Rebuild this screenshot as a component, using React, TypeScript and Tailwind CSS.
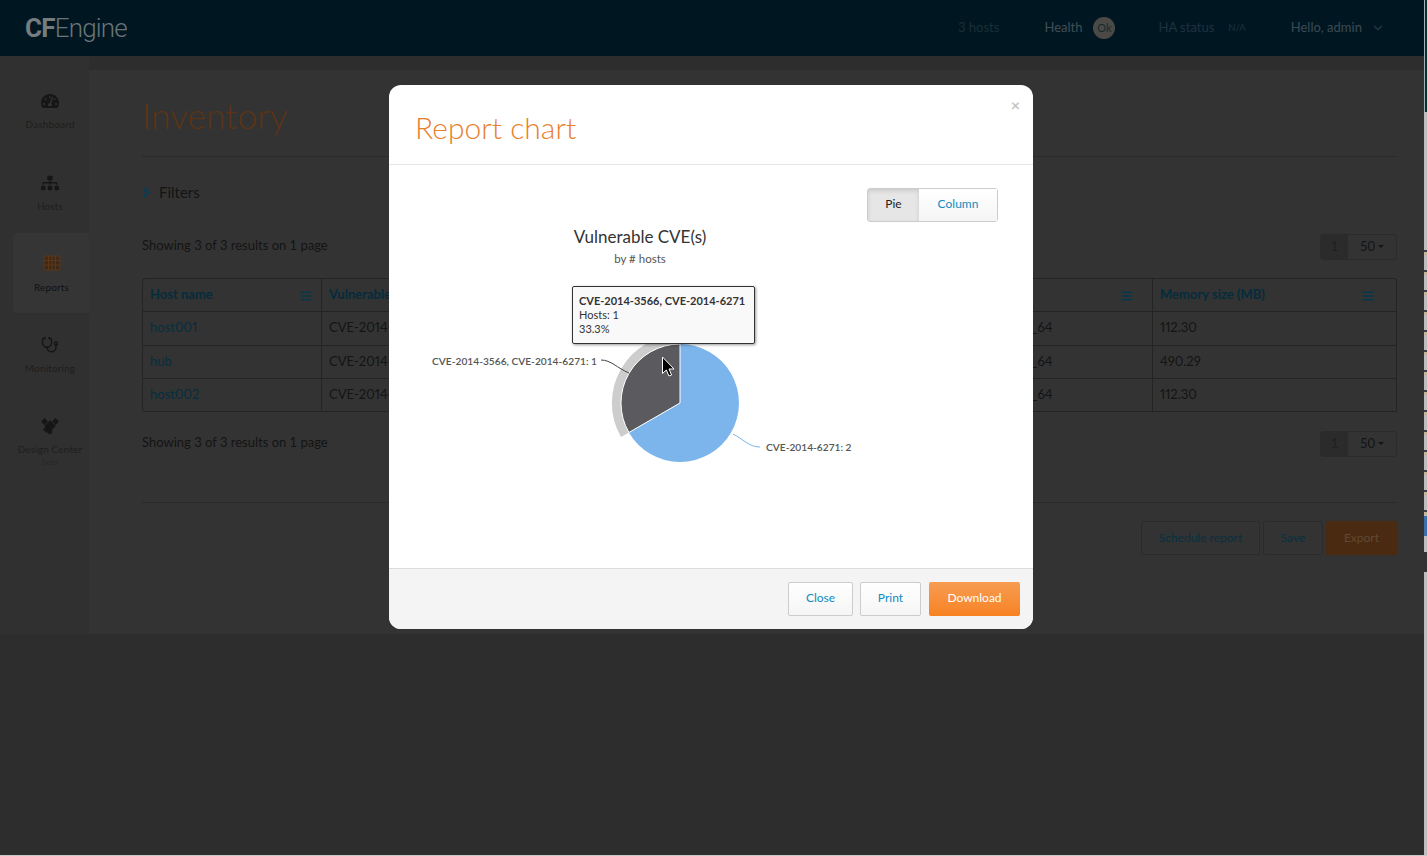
import { FaBars, FaChevronDown, FaChevronRight, FaSitemap, FaTachometerAlt } from "react-icons/fa";
import { Stethoscope } from "lucide-react";
import type { ReactNode } from "react";

const rows = [
  { host: "host001", cve: "CVE-2014-3566, CVE-2014-6271", arch: "x86_64", mem: "112.30", h: "h-[34px]", pad: "pb-[2px]" },
  { host: "hub", cve: "CVE-2014-6271", arch: "x86_64", mem: "490.29", h: "h-[33px]", pad: "pb-0" },
  { host: "host002", cve: "CVE-2014-6271", arch: "x86_64", mem: "112.30", h: "h-[33px]", pad: "pb-0" },
];

function PuzzleIcon() {
  return (
    <svg width="18" height="18" viewBox="0 0 18 18" fill="currentColor">
      <rect x="5" y="5" width="8" height="8" transform="rotate(45 9 9)" />
      <rect x="1" y="2" width="5" height="5" transform="rotate(45 3.5 4.5)" />
      <rect x="12" y="2" width="5" height="5" transform="rotate(45 14.5 4.5)" />
      <rect x="3" y="10" width="5" height="5" transform="rotate(45 5.5 12.5)" />
      <rect x="7" y="13" width="4" height="4" transform="rotate(45 9 15)" />
    </svg>
  );
}

function GridIcon() {
  return (
    <svg width="18" height="16" viewBox="0 0 18 16">
      <path d="M1 1h16v14H1z" fill="#3d2a1a" stroke="currentColor" />
      <path d="M1 5.5h16M1 10h16M5.5 1v14M9 1v14M12.5 1v14" fill="none" stroke="currentColor" />
    </svg>
  );
}

function SideItem({ icon, label, sub, active, box }: { icon: ReactNode; label: string; sub?: string; active?: boolean; box: string }) {
  return (
    <div
      className={`flex flex-col items-center ${box} ${
        active ? "bg-[#353535] rounded-l-[4px] ml-[13px] mr-[-1px] text-[#111111]" : "pl-[11px] text-[#1e1e1e]"
      }`}
    >
      <div className={`flex items-center justify-center h-[24px] ${active ? "text-[#5e3716]" : "text-[#161616]"}`}>{icon}</div>
      <div className={`text-[10px] leading-[14px] tracking-[0.15px] whitespace-nowrap ${active ? "mt-[5px]" : "mt-[4px]"}`}>{label}</div>
      {sub && <div className="text-[8px] leading-[12px] text-[#262626]">{sub}</div>}
    </div>
  );
}

function Pager() {
  return (
    <div className="flex h-[26px] rounded-[3px] border border-[#2b2b2b] text-[13px] leading-none">
      <span className="flex items-center justify-center w-[27px] pb-px bg-[#2b2b2b] text-[#1f1f1f]">1</span>
      <span className="flex items-center justify-center gap-[3px] w-[48px] pb-px text-[#141414]">
        50 <span className="border-x-[3px] border-t-[3px] border-x-transparent border-t-[#141414]" />
      </span>
    </div>
  );
}

function HeaderCell({ label, className, pad }: { label: string; className: string; pad: string }) {
  return (
    <th className={`border-r border-b border-[#242424] pl-[7px] pr-[7px] text-left font-bold text-[#052c3c] ${className}`}>
      <div className={`flex items-center justify-between ${pad}`}>
        <span className="whitespace-nowrap overflow-hidden">{label}</span>
        <FaBars className="w-[12px] h-[12px] text-[#06384c] shrink-0 mt-[2px]" />
      </div>
    </th>
  );
}

function PieChart() {
  return (
    <svg className="absolute inset-0" width="644" height="403" viewBox="0 0 644 403">
      <text x="251" y="78" textAnchor="middle" fontSize="17" fill="#333">Vulnerable CVE(s)</text>
      <text x="251" y="98" textAnchor="middle" fontSize="11.5" fill="#555">by # hosts</text>
      <path d="M291 170 A68 68 0 0 0 232 272 L239.9 267.5 A59 59 0 0 1 291 179 Z" fill="#cdcdcd" />
      <path d="M291 238 L291 179 A59 59 0 1 1 239.9 267.5 Z" fill="#7cb5ec" />
      <path d="M291 238 L239.9 267.5 A59 59 0 0 1 291 179 Z" fill="#5a5a5f" stroke="#fff" strokeWidth="1" />
      <path d="M212 195 C222 195 228 203 240 208" fill="none" stroke="#434348" />
      <path d="M344 269 C354 274 360 282 371 282" fill="none" stroke="#7cb5ec" />
      <text x="208" y="200" textAnchor="end" fontSize="10.2" fontWeight="600" fill="#555">CVE-2014-3566, CVE-2014-6271: 1</text>
      <text x="377" y="286" fontSize="10.2" fontWeight="600" fill="#555">CVE-2014-6271: 2</text>
      <path d="M273.5 192 L273.5 208.5 L277.3 205 L280 211 L282.6 210 L280 204 L285 204 Z" fill="#000" stroke="#fff" strokeWidth="1" />
    </svg>
  );
}

export default function App() {
  return (
    <div
      className="relative flex flex-col h-[856px] w-[1427px] overflow-hidden bg-[#2d2d2d] text-[13px]"
      style={{ fontFamily: "Lato, 'Open Sans', sans-serif" }}
    >
      <div className="flex flex-1 min-h-0">
        <div className="flex flex-col flex-1 min-w-0">
          {/* top bar */}
          <header className="flex items-center h-14 bg-[#001722] pl-[25px] text-[13px] shrink-0">
            <div className="w-[102px] shrink-0 text-[26px] leading-none tracking-[-0.8px] text-[#6a7479] whitespace-nowrap" style={{ fontFamily: "Roboto, sans-serif" }}>
              <span className="font-bold text-[#767c7f]">CF</span>
              <span className="font-light">Engine</span>
            </div>
            <div className="ml-[831px] text-[#1c2e37]">3 hosts</div>
            <div className="ml-[45px] text-[#404e55]">Health</div>
            <div className="ml-[11px] flex items-center justify-center w-[22px] h-[22px] rounded-full bg-[#4b4a46] text-[#162a30] text-[11px]">Ok</div>
            <div className="ml-[43px] text-[#1d323e]">HA status</div>
            <div className="ml-[14px] text-[#1d323e] text-[9.5px]">N/A</div>
            <div className="ml-[45px] text-[#3c4a52]">Hello, admin</div>
            <FaChevronDown className="ml-[11px] w-[10px] h-[10px] text-[#1d3540]" />
          </header>

          <div className="flex flex-1 min-h-0">
            {/* left nav */}
            <nav className="w-[89px] shrink-0 pt-[14px] bg-[#303030] h-[578px]">
              <SideItem box="h-[82px] pt-[19px]" icon={<FaTachometerAlt className="w-[18px] h-[18px]" />} label="Dashboard" />
              <SideItem box="h-[81px] pt-[19px]" icon={<FaSitemap className="w-[18px] h-[18px]" />} label="Hosts" />
              <SideItem box="h-[80px] pt-[18px]" icon={<GridIcon />} label="Reports" active />
              <SideItem box="h-[81px] pt-[20px]" icon={<Stethoscope className="w-[18px] h-[18px]" />} label="Monitoring" />
              <SideItem box="h-[82px] pt-[20px]" icon={<PuzzleIcon />} label="Design Center" sub="beta" />
            </nav>

            {/* main panel */}
            <main className="flex-1 mt-[14px] h-[564px] bg-[#333333] pl-[53px] pr-[27px] pt-[24px]">
              <h1 className="text-[35.5px] leading-[44px] font-light text-[#5c3415] pb-[18px] border-b border-[#292929]">Inventory</h1>
              <div className="flex items-center gap-[9px] mt-[25px] h-[20px] text-[15px] text-[#141414]">
                <FaChevronRight className="w-[8px] h-[13px] text-[#053f5a]" />
                Filters
              </div>
              <div className="flex items-center justify-between mt-[32px] h-[26px] text-[13px] text-[#141414]">
                <span className="pb-[3px]">Showing 3 of 3 results on 1 page</span>
                <Pager />
              </div>
              <table className="mt-[18px] w-full table-fixed border-separate border-spacing-0 border-l border-t border-[#242424] rounded-[4px] text-[13px] proportional-nums">
                <thead>
                  <tr className="h-[33px]">
                    <HeaderCell label="Host name" className="w-[179px]" pad="pr-[2px]" />
                    <HeaderCell label="Vulnerable CVE(s)" className="w-[681px]" pad="pr-[2px]" />
                    <HeaderCell label="OS" className="w-[150px]" pad="pr-[12px]" />
                    <HeaderCell label="Memory size (MB)" className="" pad="pr-[15px]" />
                  </tr>
                </thead>
                <tbody>
                  {rows.map((r) => (
                    <tr key={r.host} className={r.h}>
                      <td className={`border-r border-b border-[#242424] px-[7px] ${r.pad} text-[#062e3e]`}>{r.host}</td>
                      <td className={`border-r border-b border-[#242424] px-[7px] ${r.pad} text-[#141414]`}>{r.cve}</td>
                      <td className={`border-r border-b border-[#242424] px-[7px] ${r.pad} text-[#141414]`}>{r.arch}</td>
                      <td className={`border-r border-b border-[#242424] px-[7px] ${r.pad} text-[#141414]`}>{r.mem}</td>
                    </tr>
                  ))}
                </tbody>
              </table>
              <div className="flex items-center justify-between mt-[19px] h-[26px] text-[13px] text-[#141414]">
                <span className="pb-[3px]">Showing 3 of 3 results on 1 page</span>
                <Pager />
              </div>
              <div className="flex justify-end gap-[3px] mt-[45px] pt-[18px] border-t border-[#292929] text-[12px]">
                <button className="h-[34px] w-[119px] pb-px border border-[#2b2b2b] rounded-[2px] text-[#083040]">Schedule report</button>
                <button className="h-[34px] w-[60px] pb-px border border-[#2b2b2b] rounded-[2px] text-[#083040]">Save</button>
                <button className="h-[34px] w-[71px] pb-px bg-[#4a2a10] rounded-[2px] text-[#5f4a38]">Export</button>
              </div>
            </main>
          </div>
        </div>
        {/* edge of the window behind */}
        <div className="w-[3px] shrink-0 flex flex-col bg-[#bdbdbd]">
          <div className="h-[112px] bg-[#0c2c36] border-l border-[#9fb4b4]" />
          <div className="mt-[138px] h-[266px] bg-[repeating-linear-gradient(180deg,#3a3f4a_0px,#3a3f4a_2px,#c8b49a_2px,#c8b49a_5px,#bdbdbd_5px,#bdbdbd_20px)]" />
          <div className="h-[20px] bg-[#3f6fa8]" />
          <div className="mt-[16px] h-[20px] bg-[#333]" />
        </div>
      </div>
      <div className="h-px bg-[#c8c8c8] shrink-0" />

      {/* modal */}
      <div className="absolute inset-0 flex justify-center pt-[85px] pr-[5px]">
        <div className="relative flex flex-col w-[644px] h-[544px] bg-white rounded-[12px] overflow-hidden">
          <div className="relative h-[80px] border-b border-[#e5e5e5] pl-[26px] pt-[23px] shrink-0">
            <h2 className="text-[30px] leading-[38px] font-light text-[#e8802f]">Report chart</h2>
            <span className="absolute right-[13px] top-[12px] text-[16px] font-bold leading-none text-[#c4c4c4]">×</span>
          </div>
          <div className="relative flex-1">
            <PieChart />
            <div className="relative flex justify-end pt-[23px] pr-[35px] text-[12px]">
              <div className="flex h-[34px] rounded-[3px] border border-[#cccccc]">
                <span className="flex items-center justify-center w-[51px] pb-[2px] bg-[#e6e6e6] text-[#222] shadow-[inset_0_2px_4px_rgba(0,0,0,0.12)]">Pie</span>
                <span className="flex items-center justify-center w-[78px] pb-[2px] bg-gradient-to-b from-white to-[#f5f5f5] text-[#0f8cc0]">Column</span>
              </div>
            </div>
            {/* chart tooltip */}
            <div className="absolute left-[183px] top-[121px] w-[183px] h-[58px] pl-[6px] pt-[7px] bg-[#f9f9f9] border border-[#333] rounded-[2px] text-[11px] leading-[14px] text-[#333] shadow-[1px_1px_3px_rgba(0,0,0,0.4)]">
              <div className="font-bold whitespace-nowrap">CVE-2014-3566, CVE-2014-6271</div>
              <div>Hosts: 1</div>
              <div>33.3%</div>
            </div>
          </div>
          <div className="flex justify-end items-center gap-[7px] h-[61px] pr-[13px] bg-[#f4f4f4] border-t border-[#dddddd] shrink-0 text-[12px]">
            <button className="h-[34px] w-[65px] pb-[2px] border border-[#cccccc] rounded-[2px] bg-gradient-to-b from-white to-[#f5f5f5] text-[#0f8cc0]">Close</button>
            <button className="h-[34px] w-[61px] pb-[2px] border border-[#cccccc] rounded-[2px] bg-gradient-to-b from-white to-[#f5f5f5] text-[#0f8cc0]">Print</button>
            <button className="h-[34px] w-[91px] pb-[2px] ml-px rounded-[2px] bg-gradient-to-b from-[#f79c50] to-[#f78220] text-white">Download</button>
          </div>
        </div>
      </div>
    </div>
  );
}
